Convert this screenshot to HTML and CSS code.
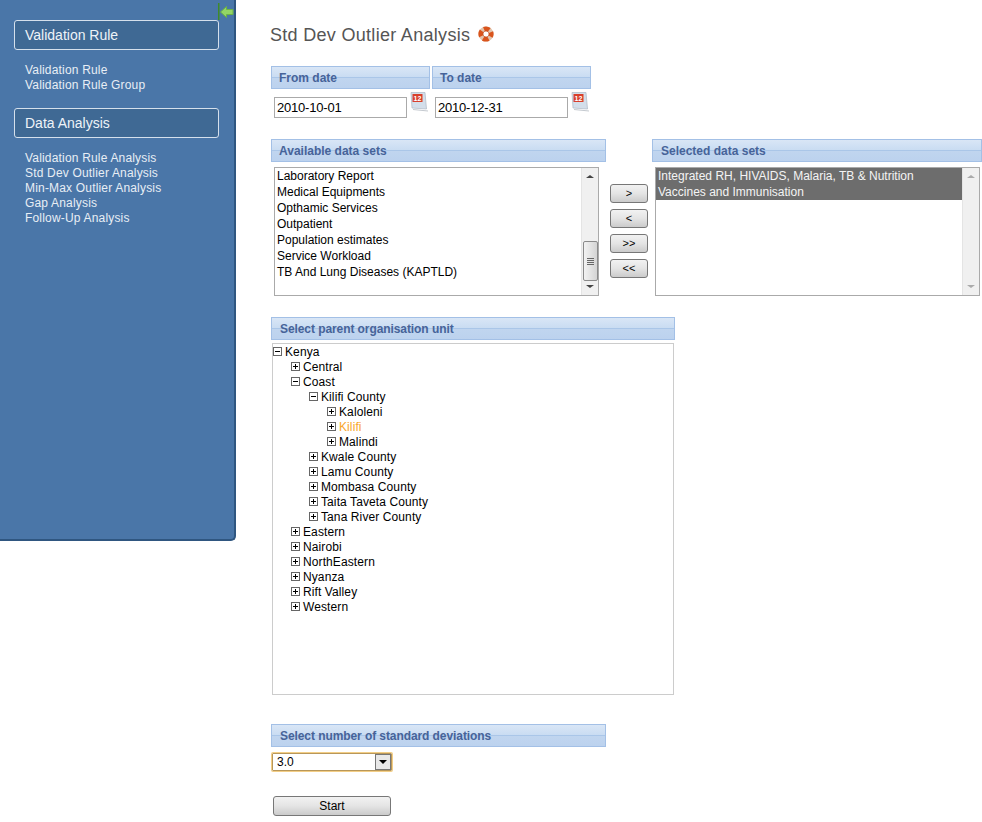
FILE: index.html
```html
<!DOCTYPE html>
<html lang="en">
<head>
    <meta charset="UTF-8">
    <title>Std Dev Outlier Analysis</title>
    <link rel="stylesheet" href="styles.css">
</head>
<body>

    <div id="leftBar">
        <svg class="hide-arrow" width="16" height="17" viewBox="0 0 16 17">
            <rect x="0" y="0" width="1.5" height="17" fill="#3f8a2a"/>
            <path d="M2.5 9 L8.5 3.5 V6.5 H15 V11.5 H8.5 V14.5 Z" fill="#93d566" stroke="#6cb345"/>
        </svg>

        <div class="menu-head">Validation Rule</div>
        <ul class="menu-list">
            <li>Validation Rule</li>
            <li>Validation Rule Group</li>
        </ul>

        <div class="menu-head">Data Analysis</div>
        <ul class="menu-list">
            <li>Validation Rule Analysis</li>
            <li>Std Dev Outlier Analysis</li>
            <li>Min-Max Outlier Analysis</li>
            <li>Gap Analysis</li>
            <li>Follow-Up Analysis</li>
        </ul>
    </div>

    <div id="mainPage">
        <h3 class="page-title">
            Std Dev Outlier Analysis
            <svg width="16" height="16" viewBox="0 0 16 16">
                <circle cx="8" cy="8" r="5.3" fill="#fff" stroke="#e3c4ac" stroke-width="4.6"/>
                <circle cx="8" cy="8" r="5.3" fill="none" stroke="#d9541c" stroke-width="4.6" stroke-dasharray="5.6 2.73" stroke-dashoffset="2.8"/>
                <circle cx="8" cy="8" r="3" fill="none" stroke="#b8481a" stroke-width="0.6"/>
            </svg>
        </h3>

        <div class="row-dates">
            <div class="date-col">
                <div class="band band-short">From date</div>
                <div class="date-field">
                    <div class="date-input">2010-10-01</div>
                    <svg class="cal" width="19" height="20" viewBox="0 0 19 20">
                        <path d="M1 0.5 H15 L16.5 17 L2 16 Z" fill="#d3deea" stroke="#aeb8c4" stroke-width="0.7"/>
                        <rect x="2.5" y="2" width="10" height="8" fill="#d8402c"/>
                        <text class="cal-num" x="7.5" y="8.7">12</text>
                        <path d="M3 17.5 L18 19" stroke="#c4c9cf"/>
                    </svg>
                </div>
            </div>
            <div class="date-col">
                <div class="band band-short">To date</div>
                <div class="date-field">
                    <div class="date-input">2010-12-31</div>
                    <svg class="cal" width="19" height="20" viewBox="0 0 19 20">
                        <path d="M1 0.5 H15 L16.5 17 L2 16 Z" fill="#d3deea" stroke="#aeb8c4" stroke-width="0.7"/>
                        <rect x="2.5" y="2" width="10" height="8" fill="#d8402c"/>
                        <text class="cal-num" x="7.5" y="8.7">12</text>
                        <path d="M3 17.5 L18 19" stroke="#c4c9cf"/>
                    </svg>
                </div>
            </div>
        </div>

        <div class="row-sets">
            <div class="set-col">
                <div class="band band-short">Available data sets</div>
                <div class="listbox listbox-left">
                    <ul class="options">
                        <li>Laboratory Report</li>
                        <li>Medical Equipments</li>
                        <li>Opthamic Services</li>
                        <li>Outpatient</li>
                        <li>Population estimates</li>
                        <li>Service Workload</li>
                        <li>TB And Lung Diseases (KAPTLD)</li>
                    </ul>
                    <div class="scroll">
                        <span class="arrow-up"></span>
                        <div class="scroll-track"></div>
                        <div class="scroll-thumb"><span class="grip"></span></div>
                        <span class="arrow-down"></span>
                    </div>
                </div>
            </div>

            <div class="move-buttons">
                <div class="btn-small">&gt;</div>
                <div class="btn-small">&lt;</div>
                <div class="btn-small">&gt;&gt;</div>
                <div class="btn-small">&lt;&lt;</div>
            </div>

            <div class="set-col set-col-right">
                <div class="band">Selected data sets</div>
                <div class="listbox listbox-right">
                    <ul class="options selected">
                        <li>Integrated RH, HIVAIDS, Malaria, TB &amp; Nutrition</li>
                        <li>Vaccines and Immunisation</li>
                    </ul>
                    <div class="scroll scroll-off">
                        <span class="arrow-up"></span>
                        <div class="scroll-track"></div>
                        <span class="arrow-down"></span>
                    </div>
                </div>
            </div>
        </div>

        <div class="band band-org">Select parent organisation unit</div>
        <div class="tree">
            <div class="node"><span class="box minus"></span>Kenya</div>
            <div class="node lvl1"><span class="box plus"></span>Central</div>
            <div class="node lvl1"><span class="box minus"></span>Coast</div>
            <div class="node lvl2"><span class="box minus"></span>Kilifi County</div>
            <div class="node lvl3"><span class="box plus"></span>Kaloleni</div>
            <div class="node lvl3 picked"><span class="box plus"></span>Kilifi</div>
            <div class="node lvl3"><span class="box plus"></span>Malindi</div>
            <div class="node lvl2"><span class="box plus"></span>Kwale County</div>
            <div class="node lvl2"><span class="box plus"></span>Lamu County</div>
            <div class="node lvl2"><span class="box plus"></span>Mombasa County</div>
            <div class="node lvl2"><span class="box plus"></span>Taita Taveta County</div>
            <div class="node lvl2"><span class="box plus"></span>Tana River County</div>
            <div class="node lvl1"><span class="box plus"></span>Eastern</div>
            <div class="node lvl1"><span class="box plus"></span>Nairobi</div>
            <div class="node lvl1"><span class="box plus"></span>NorthEastern</div>
            <div class="node lvl1"><span class="box plus"></span>Nyanza</div>
            <div class="node lvl1"><span class="box plus"></span>Rift Valley</div>
            <div class="node lvl1"><span class="box plus"></span>Western</div>
        </div>

        <div class="band band-dev">Select number of standard deviations</div>
        <div class="combo">
            <span class="combo-value">3.0</span>
            <span class="combo-btn"><span class="combo-arrow"></span></span>
        </div>

        <div class="btn-start">Start</div>
    </div>

</body>
</html>
```

FILE: styles.css
```css
html, body { margin: 0; padding: 0; height: 822px; overflow: hidden; }
body { display: flex; align-items: flex-start; background: #fff; font-family: "Liberation Sans", Arial, sans-serif; font-size: 12px; color: #000; }

/* left menu */
#leftBar { position: relative; box-sizing: border-box; flex: none; width: 236px; height: 541px; padding: 20px 15px 0 14px; background: #4a76a8; border-right: 2px solid #2f5680; border-bottom: 2px solid #2f5680; border-bottom-right-radius: 5px; color: #e8eef5; }
.hide-arrow { position: absolute; left: 218px; top: 3px; }
.menu-head { box-sizing: border-box; height: 30px; line-height: 28px; padding-left: 10px; border: 1px solid #d5e0ec; border-radius: 3px; background: #3f6994; font-size: 14px; color: #eef3f8; }
.menu-list { list-style: none; margin: 13px 0 15px 11px; padding: 0; line-height: 15px; letter-spacing: 0.18px; }

/* main column */
#mainPage { flex: none; width: 712px; margin-left: 34px; }
.page-title { margin: 0; height: 66px; padding-top: 24px; box-sizing: border-box; font-size: 18px; font-weight: normal; line-height: 22px; letter-spacing: 0.3px; color: #555; }
.page-title svg { vertical-align: -1px; margin-left: 2px; }

.band { box-sizing: border-box; height: 23px; line-height: 23px; padding-left: 8px; border: 1px solid #a3c0e6; background: linear-gradient(#d9e6f6 0, #c9dcf2 48%, #aac6e8 48%, #aac6e8 54%, #c0d5ef 54%, #bcd2ee 100%); font-weight: bold; color: #466399; }
.band-short { padding-left: 7px; }

.row-dates { display: flex; gap: 2px; height: 73px; margin-left: 1px; }
.date-col { width: 159px; }
.date-field { display: flex; align-items: flex-start; padding: 3px 0 0 3px; }
.date-input { box-sizing: border-box; width: 133px; height: 21px; margin-top: 5px; line-height: 20px; padding-left: 2px; border: 1px solid #aaa; font-size: 13px; letter-spacing: -0.2px; }
.cal { margin-left: 3px; }
.cal-num { font-family: "Liberation Sans", Arial, sans-serif; font-size: 7px; font-weight: bold; fill: #fff; text-anchor: middle; }

.row-sets { display: flex; margin-left: 1px; height: 178px; }
.set-col { width: 335px; }
.set-col-right { width: 330px; }
.listbox { box-sizing: border-box; display: flex; width: 325px; height: 129px; margin: 5px 0 0 3px; border: 1px solid #aaa; }
.options { flex: 1; list-style: none; margin: 0; padding: 0; line-height: 16px; font-size: 12px; }
.options li { padding-left: 2px; }
.selected li { background: #6d6d6d; color: #f4f4f4; }

.scroll { box-sizing: border-box; display: flex; flex-direction: column; align-items: center; width: 17px; background: #f0f0f0; border-left: 1px solid #e4e4e4; }
.scroll-track { flex: 1; }
.arrow-up, .arrow-down { flex: none; width: 0; height: 0; border-left: 4px solid transparent; border-right: 4px solid transparent; }
.arrow-up { margin: 7px 0 5px; border-bottom: 3px solid #444; }
.arrow-down { margin: 5px 0 7px; border-top: 3px solid #444; }
.scroll-off .arrow-up { border-bottom-color: #aaa; }
.scroll-off .arrow-down { border-top-color: #aaa; }
.scroll-thumb { box-sizing: border-box; flex: none; display: flex; align-items: center; justify-content: center; width: 15px; height: 40px; margin-bottom: -1px; border: 1px solid #8a8a8a; border-radius: 2px; background: linear-gradient(90deg, #f2f2f2, #d4d4d4); }
.grip { width: 7px; height: 7px; background: repeating-linear-gradient(#666 0, #666 1px, transparent 1px, transparent 2px); }

.move-buttons { display: flex; flex-direction: column; gap: 6px; flex: none; width: 46px; padding: 45px 0 0 4px; box-sizing: border-box; }
.btn-small, .btn-start { box-sizing: border-box; border: 1px solid #777; border-radius: 3px; background: linear-gradient(#f2f2f2, #e4e4e4 50%, #cbcbcb); text-align: center; }
.btn-small { width: 38px; height: 19px; line-height: 17px; font-size: 11px; }

.band-org { width: 404px; margin-left: 1px; letter-spacing: -0.08px; }
.tree { box-sizing: border-box; width: 402px; height: 352px; margin: 3px 0 0 2px; border: 1px solid #ccc; letter-spacing: 0.1px; }
.node { display: flex; align-items: center; height: 15px; padding-left: 0; }
.lvl1 { padding-left: 18px; }
.lvl2 { padding-left: 36px; }
.lvl3 { padding-left: 54px; }
.picked { color: #f9a62b; }
.box { position: relative; box-sizing: border-box; flex: none; width: 9px; height: 9px; margin-right: 3px; border: 1px solid #666; background: #fff; }
.minus::before, .plus::before { content: ""; position: absolute; left: 1px; top: 3px; width: 5px; height: 1px; background: #000; }
.plus::after { content: ""; position: absolute; left: 3px; top: 1px; width: 1px; height: 5px; background: #000; }

.band-dev { width: 335px; margin: 29px 0 0 1px; letter-spacing: -0.08px; }
.combo { box-sizing: border-box; display: flex; align-items: center; justify-content: space-between; width: 120px; height: 18px; margin: 6px 0 0 2px; border: 1px solid #b8975a; box-shadow: 0 0 0 1px #f3ce86; border-radius: 1px; }
.combo-value { padding-left: 4px; }
.combo-btn { box-sizing: border-box; display: flex; align-items: center; justify-content: center; width: 16px; height: 16px; border: 1px solid #777; background: #e8e8e8; }
.combo-arrow { width: 0; height: 0; border-left: 4px solid transparent; border-right: 4px solid transparent; border-top: 4px solid #000; }

.btn-start { width: 118px; height: 20px; margin: 25px 0 0 3px; line-height: 18px; }
```
